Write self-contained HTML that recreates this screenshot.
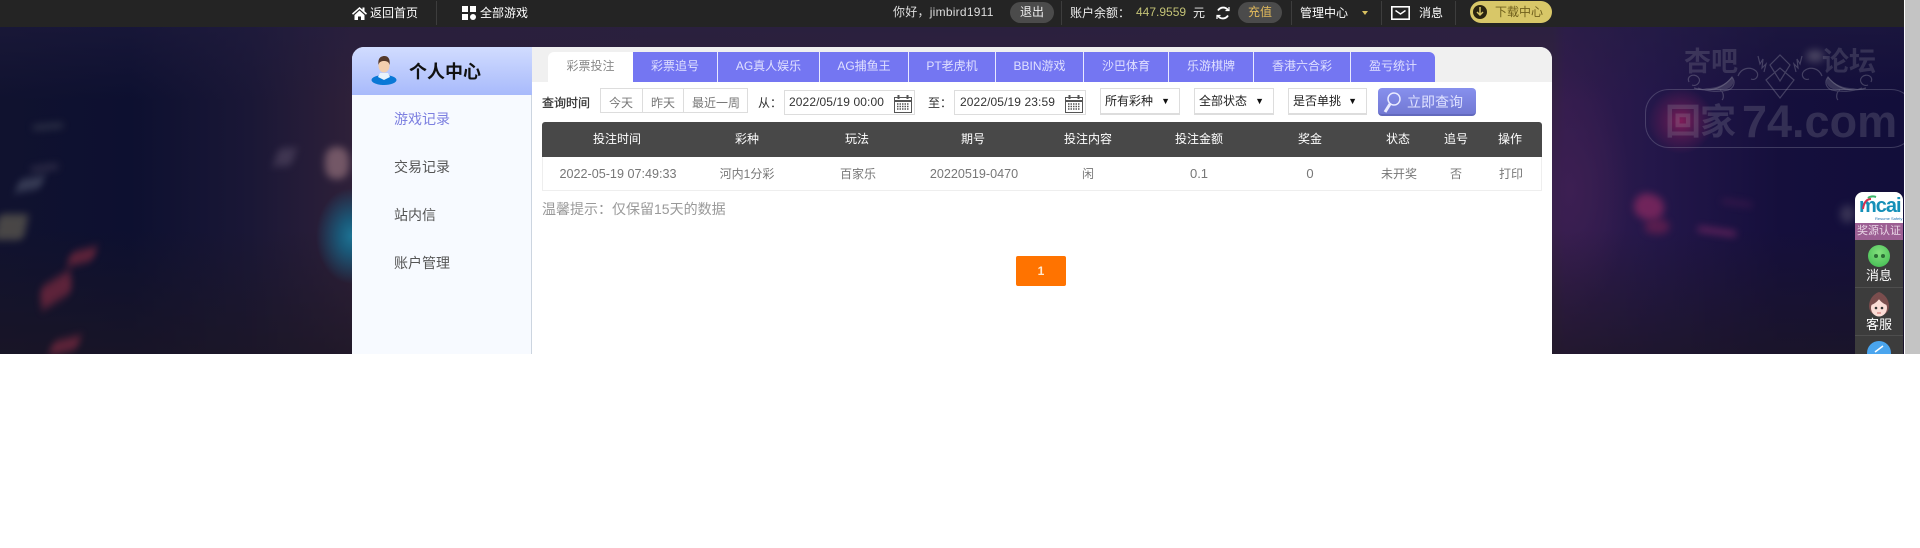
<!DOCTYPE html>
<html lang="zh-CN"><head><meta charset="utf-8"><title>个人中心</title>
<style>
*{box-sizing:border-box;margin:0;padding:0}
html,body{width:1920px;height:548px;overflow:hidden;background:#fff;font-family:"Liberation Sans","Noto Sans CJK SC",sans-serif;font-size:12px}
.a,.t,.c,.b{position:absolute}
.t,.c{white-space:nowrap;line-height:16px}
.c{transform:translateX(-50%)}
.b{filter:blur(4px);opacity:.72}
#bg{position:absolute;left:0;top:0;width:1904px;height:354px;overflow:hidden;background:
radial-gradient(ellipse 60px 120px at 1570px 190px,#3c1f52 0,rgba(60,31,82,0) 100%),
linear-gradient(90deg,#10122f 0,#0d1030 130px,#1a1736 250px,#2e2039 352px,#33223f 1552px,#331c4d 1565px,#24174a 1650px,#150f3c 1780px,#120e3a 1904px)}
#bgshade{position:absolute;left:0;right:0;top:0;bottom:0;background:linear-gradient(180deg,rgba(35,30,65,.45) 27px,rgba(0,0,0,0) 100px,rgba(0,0,0,0) 230px,rgba(28,22,35,.7) 354px)}
#top{position:absolute;left:0;top:0;width:1904px;height:27px;background:#242424;color:#fff}
.dv{position:absolute;top:1px;width:1px;height:24px;background:#3d3d3d}
.pill{position:absolute;top:2px;height:21px;border-radius:11px;background:#4b4b4b;text-align:center;line-height:21px}
#panel{position:absolute;left:352px;top:47px;width:1200px;height:307px;background:#fff;border-radius:12px 12px 0 0;overflow:hidden}
#side{position:absolute;left:0;top:48px;width:180px;height:259px;background:#f7faff;border-right:1px solid #ccd5e0}
#hd{position:absolute;left:0;top:0;width:180px;height:48px;background:linear-gradient(180deg,#d1dcff,#a8bafb)}
#strip{position:absolute;left:180px;top:0;width:1020px;height:35px;background:#f0f0f0}
.tab{position:absolute;top:5px;height:30px;background:#7476f2;color:#e0e0ff;text-align:center;line-height:29px;border-right:1px solid #e9e9ff}
.m{position:absolute;left:42px;font-size:14px;line-height:20px;color:#555}
.box{position:absolute;border:1px solid #ddd;background:#fff}
.sel{position:absolute;top:41px;height:27px;width:80px;border:1px solid #ddd;border-bottom-width:2px;background:#fff;color:#222;line-height:25px;padding-left:4px}
.sel i{position:absolute;right:9px;top:0;font-style:normal;font-size:9px;color:#111}
.th{position:absolute;top:84px;color:#fff;transform:translateX(-50%);white-space:nowrap;line-height:16px}
.td{position:absolute;top:119px;color:#777;transform:translateX(-50%);white-space:nowrap;line-height:16px;font-size:12px}
.wm{position:absolute;color:rgba(150,150,165,.24);font-weight:bold;white-space:nowrap}
#rail{position:absolute;left:1855px;top:192px;width:48px;height:162px;overflow:hidden;background:#3c3c3c;border-radius:8px 8px 0 0;color:#fff}
</style></head><body>
<div id="bg">
<div id="bgshade"></div>
<!-- left bokeh -->
<div class="b" style="left:33px;top:124px;width:30px;height:5px;background:#3c4152;transform:rotate(-5deg)"></div>
<div class="b" style="left:31px;top:165px;width:27px;height:6px;background:#3a3650;transform:rotate(-8deg)"></div>
<div class="b" style="left:17px;top:178px;width:26px;height:12px;background:#474c64;transform:rotate(-10deg) skewX(-25deg)"></div>
<div class="b" style="left:-4px;top:214px;width:30px;height:26px;background:#5f5b50;border-radius:4px;transform:skewX(-12deg)"></div>
<div class="b" style="left:68px;top:250px;width:28px;height:13px;background:#7c2a3e;border-radius:4px;transform:rotate(-14deg) skewX(-25deg)"></div>
<div class="b" style="left:38px;top:280px;width:36px;height:20px;background:#7a2a40;border-radius:4px;transform:rotate(-32deg) skewX(-25deg)"></div>
<div class="b" style="left:50px;top:339px;width:30px;height:13px;background:#7a2a40;border-radius:4px;transform:rotate(-14deg) skewX(-25deg)"></div>
<div class="b" style="left:276px;top:148px;width:18px;height:18px;background:#4c415c;transform:skewX(-18deg)"></div>
<div class="b" style="left:325px;top:147px;width:24px;height:32px;background:#8f6d78;border-radius:40%"></div>
<div class="a" style="left:316px;top:188px;width:72px;height:96px;background:radial-gradient(ellipse closest-side,#1d7394 0,#1a5878 35%,rgba(27,70,110,0) 100%)"></div>
<!-- right bokeh -->
<div class="a" style="left:1648px;top:88px;width:66px;height:66px;background:radial-gradient(circle closest-side,#7e1c58 0,rgba(105,28,85,.6) 45%,rgba(90,30,85,0) 100%)"></div>
<div class="b" style="left:1634px;top:194px;width:30px;height:26px;background:#8e2a62;border-radius:45%;transform:rotate(20deg)"></div>
<div class="b" style="left:1645px;top:219px;width:24px;height:15px;background:#6c2050;border-radius:40%"></div>
<div class="b" style="left:1722px;top:201px;width:30px;height:4px;background:#4d1c52;transform:rotate(8deg)"></div>
<div class="b" style="left:1698px;top:229px;width:38px;height:5px;background:#8a2c6a;transform:rotate(8deg)"></div>
<div class="b" style="left:1806px;top:50px;width:18px;height:12px;background:#5d5870;border-radius:50%"></div>
<div class="b" style="left:1840px;top:205px;width:15px;height:18px;background:#45405e;border-radius:50%"></div>
<!-- watermark -->
<div class="wm" style="left:1684px;top:47px;font-size:27px;line-height:30px">杏吧</div>
<div class="wm" style="left:1822px;top:47px;font-size:27px;line-height:30px">论坛</div>
<svg class="a" style="left:1680px;top:50px" width="200" height="52" viewBox="0 0 200 52" fill="none" stroke="rgba(160,160,175,.33)" stroke-width="1.200">
<g id="o"><path d="M9 32c-3-6 5-9 9-5s-1 10-6 8M14 38c14 4 28 2 38-11 4 5 2 11-4 13-8 2-20 2-30-2M40 40c4 2 4 8 2 10M58 26c3-8 12-10 18-5 4 4 0 10-5 8M78 6l2 8 3-5-1 9 4-4-2 8"/><path d="M22 38c12 1 22-2 30-11 3 5 1 10-5 12-8 2-16 1-25-1z" fill="rgba(150,150,165,.28)" stroke="none"/></g>
<use href="#o" transform="matrix(-1 0 0 1 200 0)"/>
<path d="M90 15l10 16 10-16-10-10zM86 30l14 18 14-18-14-12z"/>
</svg>
<div class="a" style="left:1645px;top:89px;width:270px;height:59px;border:1.500px solid rgba(150,150,170,.32);border-radius:24px"></div>
<div class="wm" style="left:1665px;top:102px;font-size:36px;line-height:40px;letter-spacing:-1px">回家</div>
<div class="wm" style="left:1742px;top:99px;font-size:45px;line-height:46px;font-family:'Liberation Sans',sans-serif">74.com</div>
</div>

<div class="a" style="left:1905px;top:0;width:15px;height:354px;background:#c4c4c4"></div>

<div id="top">
<svg class="a" style="left:352px;top:6px" width="15" height="14" viewBox="0 0 15 14" fill="#fff"><path d="M7.500 1 0 7.500l1 1.200L7.500 3l6.500 5.700 1-1.200-2.500-2.200V1.500h-2v2zM2.500 9v5h3.500v-3.500h3V14h3.500V9L7.500 4.500z"/></svg>
<div class="t" style="left:370px;top:5px;color:#fff">返回首页</div>
<div class="dv" style="left:436px"></div>
<svg class="a" style="left:462px;top:6px" width="14" height="14" fill="#fff"><rect width="6" height="6"/><rect x="8" width="6" height="6"/><rect y="8" width="6" height="6"/><circle cx="11" cy="11" r="3"/></svg>
<div class="t" style="left:480px;top:5px">全部游戏</div>
<div class="t" style="left:893px;top:4px;color:#ddd;letter-spacing:.25px">你好，jimbird1911</div>
<div class="pill" style="left:1010px;width:44px;color:#eee">退出</div>
<div class="dv" style="left:1061px"></div>
<div class="t" style="left:1070px;top:5px;color:#eee">账户余额：</div>
<div class="t" style="left:1136px;top:4px;color:#c3c276">447.9559</div>
<div class="t" style="left:1193px;top:5px;color:#eee">元</div>
<svg class="a" style="left:1215px;top:5px" width="16" height="16" viewBox="0 0 16 16" fill="none" stroke="#fff" stroke-width="1.800"><path d="M3 5.500A6 6 0 0 1 13 5M13 10.500A6 6 0 0 1 3 11"/><path d="M10.500 5.500H14V2M5.500 10.500H2V14" stroke-width="1.200"/></svg>
<div class="pill" style="left:1238px;width:44px;color:#e3bb5c">充值</div>
<div class="dv" style="left:1291px"></div>
<div class="t" style="left:1300px;top:5px">管理中心</div>
<div class="a" style="left:1362px;top:11px;width:0;height:0;border:3.500px solid transparent;border-top:4px solid #d8c060"></div>
<div class="dv" style="left:1381px"></div>
<svg class="a" style="left:1391px;top:6px" width="19" height="14" fill="none" stroke="#fff"><rect x=".8" y=".8" width="17.400" height="12.400" stroke-width="1.600"/><path d="M4.500 4.500 9.500 8l5-3.500" stroke-width="1.400"/></svg>
<div class="t" style="left:1419px;top:5px">消息</div>
<div class="dv" style="left:1455px"></div>
<div class="a" style="left:1470px;top:1px;width:82px;height:22px;border-radius:11px;background:#d8c768"></div>
<div class="a" style="left:1473px;top:5px;width:14px;height:14px;border-radius:50%;background:#2a2410"></div>
<svg class="a" style="left:1476px;top:7px" width="8" height="10" fill="none" stroke="#d8c768" stroke-width="1.500"><path d="M4 0v8M1 5l3 3 3-3"/></svg>
<div class="t" style="left:1495px;top:4px;color:#6f5f1c">下载中心</div>
</div>

<div id="panel">
<div id="hd"></div>
<svg class="a" style="left:19px;top:9px" width="26" height="29" viewBox="0 0 26 29">
<ellipse cx="13" cy="24" rx="12.500" ry="5" fill="#0a78d6"/><path d="M9 17h8l2 4-6 3-6-3z" fill="#e9f2fb"/>
<ellipse cx="13" cy="9.500" rx="5.500" ry="7" fill="#f3cfae"/><path d="M7.500 9C6.500 2 10 0 13.500 0S19.500 3 18.500 9C18 6 16 5 13 5S8 6 7.500 9z" fill="#54392b"/></svg>
<div class="t" style="left:57px;top:13px;font-size:18px;line-height:24px;font-weight:bold;color:#111">个人中心</div>
<div id="side"></div>
<div class="m" style="top:62px;color:#7c7fe0">游戏记录</div>
<div class="m" style="top:110px">交易记录</div>
<div class="m" style="top:158px">站内信</div>
<div class="m" style="top:206px">账户管理</div>
<div id="strip"></div>
<div class="a" style="left:196px;top:5px;width:85px;height:30px;background:#fff;border-radius:6px 0 0 0;text-align:center;line-height:29px;color:#888">彩票投注</div>
<div class="tab" style="left:281px;width:85px">彩票追号</div>
<div class="tab" style="left:366px;width:102px">AG真人娱乐</div>
<div class="tab" style="left:468px;width:89px">AG捕鱼王</div>
<div class="tab" style="left:557px;width:87px">PT老虎机</div>
<div class="tab" style="left:644px;width:88px">BBIN游戏</div>
<div class="tab" style="left:732px;width:85px">沙巴体育</div>
<div class="tab" style="left:817px;width:85px">乐游棋牌</div>
<div class="tab" style="left:902px;width:97px">香港六合彩</div>
<div class="tab" style="left:999px;width:84px;border-right:0;border-radius:0 6px 0 0">盈亏统计</div>

<div class="t" style="left:190px;top:48px;color:#333;-webkit-text-stroke:.25px #333">查询时间</div>
<div class="box" style="left:248px;top:41px;width:148px;height:25px"></div>
<div class="a" style="left:290px;top:41px;width:1px;height:25px;background:#ddd"></div>
<div class="a" style="left:331px;top:41px;width:1px;height:25px;background:#ddd"></div>
<div class="c" style="left:269px;top:48px;color:#777">今天</div>
<div class="c" style="left:311px;top:48px;color:#777">昨天</div>
<div class="c" style="left:364px;top:48px;color:#777">最近一周</div>
<div class="t" style="left:406px;top:48px;color:#333">从：</div>
<div class="box" style="left:432px;top:43px;width:131px;height:25px"></div>
<div class="t" style="left:437px;top:47px;color:#333;letter-spacing:.1px">2022/05/19 00:00</div>
<svg class="a" style="left:542px;top:48px" width="18" height="18" viewBox="0 0 18 18" fill="none" stroke="#555"><rect x=".5" y="2.500" width="17" height="15"/><path d="M.5 6h17" stroke-width="2"/><path d="M4.500 0v4M13.500 0v4" stroke-width="2"/><path d="M3 9h12M3 11.500h12M3 14h12" stroke-dasharray="1.500 1" stroke-width="1.500"/></svg>
<div class="t" style="left:576px;top:48px;color:#333">至：</div>
<div class="box" style="left:602px;top:43px;width:132px;height:25px"></div>
<div class="t" style="left:608px;top:47px;color:#333;letter-spacing:.1px">2022/05/19 23:59</div>
<svg class="a" style="left:713px;top:48px" width="18" height="18" viewBox="0 0 18 18" fill="none" stroke="#555"><rect x=".5" y="2.500" width="17" height="15"/><path d="M.5 6h17" stroke-width="2"/><path d="M4.500 0v4M13.500 0v4" stroke-width="2"/><path d="M3 9h12M3 11.500h12M3 14h12" stroke-dasharray="1.500 1" stroke-width="1.500"/></svg>
<div class="sel" style="left:748px">所有彩种<i>▼</i></div>
<div class="sel" style="left:842px">全部状态<i>▼</i></div>
<div class="sel" style="left:936px;width:79px">是否单挑<i>▼</i></div>
<div class="a" style="left:1026px;top:41px;width:98px;height:28px;border-radius:4px;background:linear-gradient(180deg,#8790ee,#7279d4);border-bottom:2px solid #6269bd"></div>
<svg class="a" style="left:1031px;top:45px" width="18" height="22" viewBox="0 0 18 22" fill="none" stroke="#e9ebff" stroke-width="1.500"><circle cx="11" cy="7" r="6"/><path d="M7 12 2 20" stroke-width="3"/></svg>
<div class="t" style="left:1055px;top:46px;color:#dfe2ff;font-size:14px;line-height:18px">立即查询</div>

<div class="a" style="left:190px;top:75px;width:1000px;height:35px;background:#484848;border-radius:3px 3px 0 0"></div>
<div class="a" style="left:190px;top:110px;width:1000px;height:34px;border:1px solid #eee;border-top:0"></div>
<div class="th" style="left:265px">投注时间</div><div class="th" style="left:395px">彩种</div><div class="th" style="left:505px">玩法</div><div class="th" style="left:621px">期号</div><div class="th" style="left:736px">投注内容</div><div class="th" style="left:847px">投注金额</div><div class="th" style="left:958px">奖金</div><div class="th" style="left:1046px">状态</div><div class="th" style="left:1104px">追号</div><div class="th" style="left:1158px">操作</div>
<div class="td" style="left:266px;font-size:12.600px">2022-05-19 07:49:33</div><div class="td" style="left:395px">河内1分彩</div><div class="td" style="left:506px">百家乐</div><div class="td" style="left:622px;font-size:12.600px">20220519-0470</div><div class="td" style="left:736px">闲</div><div class="td" style="left:847px;font-size:13px">0.1</div><div class="td" style="left:958px;font-size:13px">0</div><div class="td" style="left:1047px">未开奖</div><div class="td" style="left:1104px">否</div><div class="td" style="left:1159px">打印</div>
<div class="t" style="left:190px;top:152px;font-size:14px;line-height:20px;color:#999">温馨提示：仅保留15天的数据</div>
<div class="a" style="left:664px;top:209px;width:50px;height:30px;background:#ff7300;border-radius:2px;color:#ffe9d0;text-align:center;line-height:30px;font-weight:bold">1</div>
</div>

<div id="rail">
<div class="a" style="left:0;top:0;width:48px;height:31px;background:#fff"></div>
<div class="t" style="left:4px;top:4px;font-size:20px;line-height:20px;font-weight:bold;color:#1590b8;letter-spacing:-1px">mcai</div>
<svg class="a" style="left:5px;top:2px" width="20" height="16" fill="none" stroke-width="2"><path d="M3 15C4 8 7 5 11 5" stroke="#d9304f"/><path d="M8 4c2-1.500 5-2 8-1" stroke="#3bb56a"/></svg>
<div class="a" style="left:20px;top:24px;font-size:4px;line-height:5px;color:#2275b5;white-space:nowrap">Resume Safety</div>
<div class="a" style="left:0;top:31px;width:48px;height:17px;background:#9c5f93;color:#e9d6e6;text-align:center;line-height:17px;font-size:11px;white-space:nowrap">奖源认证</div>
<div class="a" style="left:13px;top:53px;width:22px;height:22px;border-radius:50%;background:radial-gradient(circle at 50% 35%,#82e07c,#3cb84f)"></div>
<div class="a" style="left:19px;top:62px;width:4px;height:4px;border-radius:50%;background:#2c6d36"></div>
<div class="a" style="left:26px;top:62px;width:4px;height:4px;border-radius:50%;background:#2c6d36"></div>
<div class="c" style="left:24px;top:76px;font-size:13px;color:#fff">消息</div>
<div class="a" style="left:0;top:95px;width:48px;height:1px;background:#4e4e4e"></div>
<svg class="a" style="left:11px;top:100px" width="26" height="26" viewBox="0 0 26 26"><path d="M13 0C7 2 3 8 3 14c0 5 3 8 5 8h10c2 0 5-3 5-8C23 8 19 2 13 0z" fill="#7a4d4d"/><ellipse cx="13" cy="16" rx="8" ry="8.500" fill="#fbdcd6"/><path d="M5 13c3-1 6-3 8-6 2 3 5 5 8 6-1-5-4-8-8-8s-7 3-8 8z" fill="#7a4d4d"/><circle cx="10" cy="16" r="1.300" fill="#333"/><circle cx="16" cy="16" r="1.300" fill="#333"/><path d="M11 21h4" stroke="#c66"/></svg>
<div class="c" style="left:24px;top:125px;font-size:13px;color:#fff">客服</div>
<div class="a" style="left:0;top:143px;width:48px;height:1px;background:#4e4e4e"></div>
<div class="a" style="left:12px;top:149px;width:24px;height:24px;border-radius:50%;background:#4aa5ee"></div>
<svg class="a" style="left:18px;top:153px" width="12" height="8" fill="none" stroke="#fff" stroke-width="1.500"><path d="M2 7 10 1"/></svg>
</div>
</body></html>
